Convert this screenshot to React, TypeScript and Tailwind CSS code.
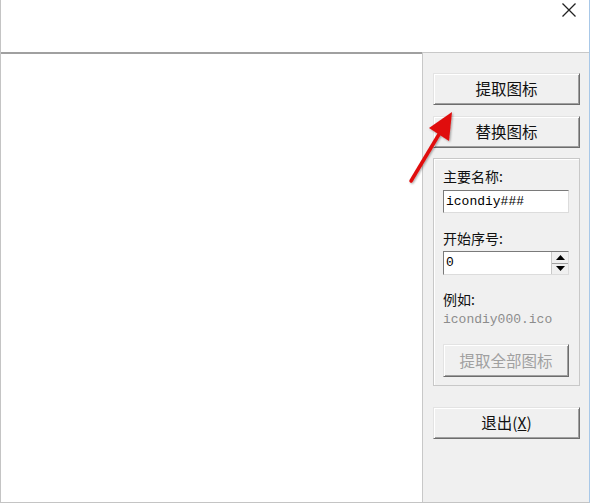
import React from "react";

const cjk = { fontFamily: '"Noto Sans CJK SC", "Noto Sans", sans-serif' };
const mono = { fontFamily: '"Liberation Mono", "DejaVu Sans Mono", monospace' };

function Btn({ children, disabled, className = "" }: { children: React.ReactNode; disabled?: boolean; className?: string }) {
  return (
    <div
      className={`flex items-center justify-center bg-[#f0f0f0] border border-t-[#e3e3e3] border-l-[#e3e3e3] border-r-[#6d6d6d] border-b-[#6d6d6d] shadow-[inset_1px_1px_0_#ffffff,inset_-1px_-1px_0_#a0a0a0] text-[15.5px] ${disabled ? "text-[#a0a0a0]" : "text-[#111]"} ${className}`}
      style={cjk}
    >
      {children}
    </div>
  );
}

export default function App() {
  return (
    <div className="relative w-[590px] h-[503px] bg-white flex flex-col border-l border-b border-[#c4c4c4] border-r border-r-[#a8c8e8] overflow-hidden">
      <div className="h-[52px] relative flex justify-end items-start pr-[12px]">
        <svg width="16" height="16" viewBox="0 0 16 16" className="mt-[2px]">
          <path d="M1.5 1.5 L14.5 14.5 M14.5 1.5 L1.5 14.5" stroke="#222" strokeWidth="1.3" />
        </svg>
      </div>
      <div className="flex-1 flex">
        <div className="flex-1 border-t-2 border-t-[#a0a0a0] bg-white" />
        <div className="w-[167px] bg-[#f0f0f0] border-l border-t border-[#c8c8c8] pl-[10px] pr-[9px] pt-[20px] flex flex-col">
          <Btn className="h-[32px]">提取图标</Btn>
          <Btn className="h-[32px] mt-[11px]">替换图标</Btn>
          <div className="mt-[10px] border border-[#c8c8c8] shadow-[inset_1px_1px_0_#ffffff] pl-[9px] pr-[10px] pt-[7px] pb-[8px] flex flex-col text-[14px] text-[#111]" style={cjk}>
            <div className="leading-[20px]">主要名称:</div>
            <div className="mt-[4px] h-[23px] bg-white border border-[#7a7a7a] border-r-[#dcdcdc] border-b-[#dcdcdc] flex items-center pl-[2px] text-[13px] text-black" style={mono}>
              icondiy###
            </div>
            <div className="mt-[15px] leading-[20px]">开始序号:</div>
            <div className="mt-[3px] h-[24px] bg-white border border-[#7a7a7a] border-r-[#dcdcdc] border-b-[#dcdcdc] flex items-center text-[13px] text-black" style={mono}>
              <span className="flex-1 pl-[2px]">0</span>
              <div className="w-[17px] h-full flex flex-col bg-[#f0f0f0] border-l border-[#c8c8c8]">
                <div className="flex-1 flex items-center justify-center border-b border-[#a0a0a0]">
                  <svg width="9" height="5" viewBox="0 0 9 5"><path d="M4.5 0 L9 5 L0 5 Z" fill="#000" /></svg>
                </div>
                <div className="flex-1 flex items-center justify-center">
                  <svg width="9" height="5" viewBox="0 0 9 5"><path d="M0 0 L9 0 L4.5 5 Z" fill="#000" /></svg>
                </div>
              </div>
            </div>
            <div className="mt-[14px] leading-[20px]">例如:</div>
            <div className="mt-[2px] text-[13px] text-[#8c8c8c] leading-[18px]" style={mono}>icondiy000.ico</div>
            <Btn disabled className="mt-[15px] h-[33px]">提取全部图标</Btn>
          </div>
          <Btn className="h-[32px] mt-[21px]">
            退出(<span className="underline">X</span>)
          </Btn>
        </div>
      </div>
      <svg className="absolute left-0 top-0 pointer-events-none" width="590" height="503">
        <defs>
          <filter id="sh" x="-20%" y="-20%" width="140%" height="140%">
            <feDropShadow dx="1" dy="1" stdDeviation="1" floodColor="#000" floodOpacity="0.35" />
          </filter>
        </defs>
        <g filter="url(#sh)">
          <path d="M410 181 L440 131" stroke="#e01010" strokeWidth="3.5" strokeLinecap="round" />
          <path d="M451 112 L448 141 L428 128 Z" fill="#e01010" />
        </g>
      </svg>
    </div>
  );
}
